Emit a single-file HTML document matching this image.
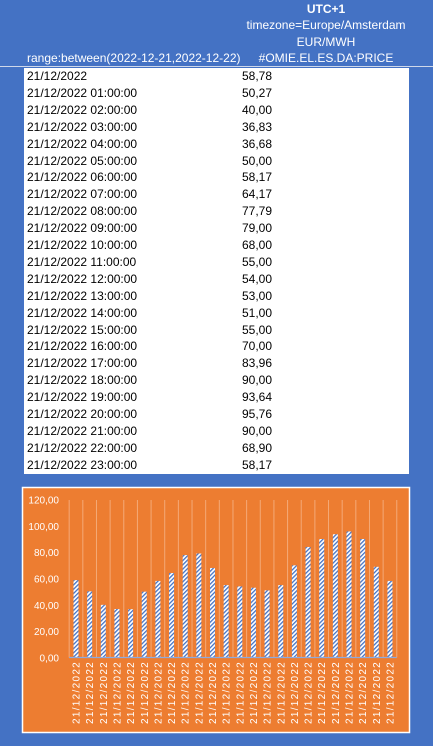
<!DOCTYPE html>
<html><head><meta charset="utf-8"><style>
body{margin:0;width:433px;height:746px;background:#4472C4;overflow:hidden;font-family:"Liberation Sans",sans-serif;position:relative}
.h{position:absolute;color:#fff;font-size:12px;text-align:center;width:200px;left:226px}
#tbl{position:absolute;left:24px;top:68px;width:385px;height:406px;background:#fff}
.r{position:absolute;left:3px;font-size:12px;color:#000;height:17px;line-height:17px}
.v{position:absolute;left:218px;font-size:12px;color:#000;line-height:17px}
</style></head><body>
<div class="h" style="top:2px;font-weight:bold">UTC+1</div>
<div class="h" style="top:18px">timezone=Europe/Amsterdam</div>
<div class="h" style="top:35px">EUR/MWH</div>
<div class="h" style="top:51px">#OMIE.EL.ES.DA:PRICE</div>
<div style="position:absolute;left:27px;top:51px;color:#fff;font-size:12px">range:between(2022-12-21,2022-12-22)</div>
<div style="position:absolute;left:0;top:66px;width:433px;height:1px;background:#cfd8ea"></div>
<div id="tbl"></div>
<svg style="position:absolute;left:0;top:0" width="433" height="746">
<defs><pattern id="p" width="3" height="3" patternUnits="userSpaceOnUse" patternTransform="rotate(45)"><rect width="3" height="3" fill="#fff"/><rect width="1.3" height="3" fill="#4472C4"/></pattern></defs>
<rect x="22.5" y="487.5" width="387" height="245" fill="#ED7D31" stroke="#fff" stroke-width="1.5"/>
<g id="g"></g>
</svg>
<script>
var vals=[58.78,50.27,40,36.83,36.68,50,58.17,64.17,77.79,79,68,55,54,53,51,55,70,83.96,90,93.64,95.76,90,68.9,58.17];
var t=document.getElementById('tbl'),h='';
for(var i=0;i<24;i++){var y=i*16.9;var d='21/12/2022'+(i?' '+(i<10?'0':'')+i+':00:00':'');
h+='<div class="r" style="top:'+y+'px">'+d+'</div><div class="v" style="top:'+y+'px">'+vals[i].toFixed(2).replace('.',',')+'</div>';}
t.innerHTML=h;
var g='',s=13.65,x0=76,y0=657.5,k=158/120;
for(var j=0;j<=6;j++){var yy=y0-j*20*k;g+='<text x="59" y="'+(yy+4)+'" fill="#fff" font-size="10" text-anchor="end" font-family="Liberation Sans">'+(j*20).toFixed(2).replace('.',',')+'</text>';}
for(var i=0;i<=24;i++){var gx=x0-s/2+i*s;g+='<line x1="'+gx+'" y1="500" x2="'+gx+'" y2="'+y0+'" stroke="#F4A977" stroke-width="1"/>';}
for(var i=0;i<24;i++){var cx=x0+i*s,hh=vals[i]*k;g+='<rect x="'+(cx-2.5)+'" y="'+(y0-hh)+'" width="5" height="'+hh+'" fill="url(#p)"/>';
g+='<text transform="translate('+(cx+3.5)+',724) rotate(-90)" fill="#fff" font-size="10" letter-spacing="1.3" font-family="Liberation Sans">21/12/2022</text>';}
g+='<line x1="'+(x0-s/2)+'" y1="'+y0+'" x2="'+(x0-s/2+24*s)+'" y2="'+y0+'" stroke="#8FAADC" stroke-width="1.2"/>';
document.getElementById('g').innerHTML=g;
</script>
</body></html>
